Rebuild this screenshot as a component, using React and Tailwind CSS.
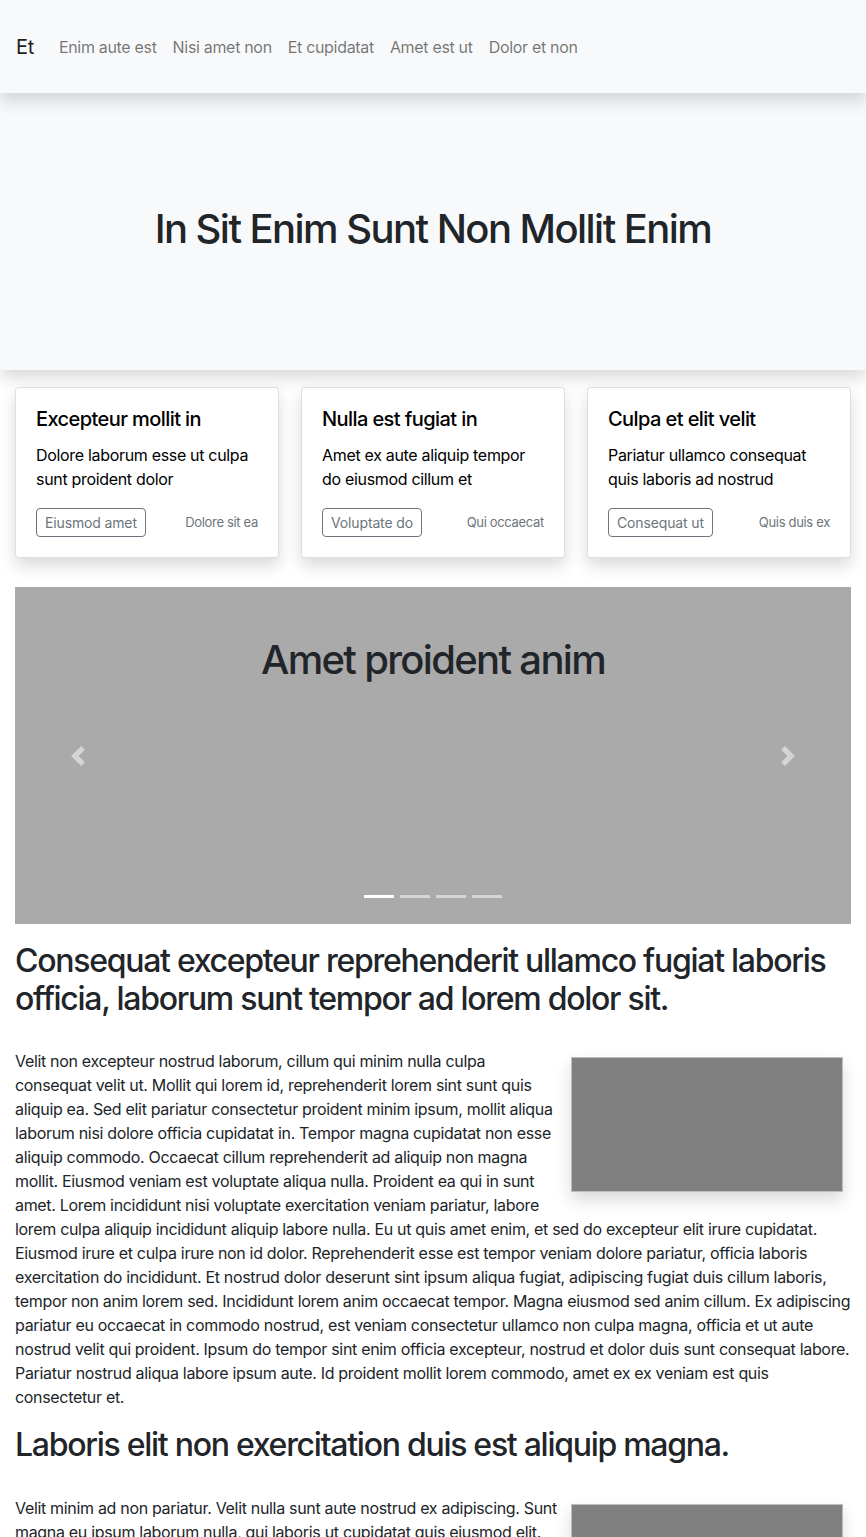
import React from 'react';

const cards = [
  { title: 'Excepteur mollit in', text: 'Dolore laborum esse ut culpa sunt proident dolor', btn: 'Eiusmod amet', note: 'Dolore sit ea' },
  { title: 'Nulla est fugiat in', text: 'Amet ex aute aliquip tempor do eiusmod cillum et', btn: 'Voluptate do', note: 'Qui occaecat' },
  { title: 'Culpa et elit velit', text: 'Pariatur ullamco consequat quis laboris ad nostrud', btn: 'Consequat ut', note: 'Quis duis ex' },
];

const navLinks = ['Enim aute est', 'Nisi amet non', 'Et cupidatat', 'Amet est ut', 'Dolor et non'];

const Chevron = ({ dir }) => (
  <svg width="20" height="20" viewBox="0 0 8 8" fill="#fff" className="opacity-50">
    {dir === 'prev' ? (
      <path d="M5.25 0l-4 4 4 4 1.5-1.5L4.25 4l2.5-2.5L5.25 0z" />
    ) : (
      <path d="M2.75 0l-1.5 1.5L3.75 4l-2.5 2.5L2.75 8l4-4-4-4z" />
    )}
  </svg>
);

const App = () => {
  return (
    <div className="min-h-screen bg-white text-[#212529] tracking-[-0.02em] font-['Inter','Liberation_Sans',sans-serif]">
      {/* navbar */}
      <nav className="relative z-10 flex items-center h-[93px] px-4 bg-[#f8f9fa] shadow-[0_0.5rem_1rem_rgba(0,0,0,0.15)]">
        <span className="text-xl text-black/90 mr-[17px]">Et</span>
        {navLinks.map((l) => (
          <a key={l} className="px-2 text-base text-black/55">{l}</a>
        ))}
      </nav>

      {/* hero */}
      <header className="h-[277px] flex items-center justify-center bg-[#f8f9fa] shadow-[0_0.5rem_1rem_rgba(0,0,0,0.15)]">
        <h1 className="text-[40px] leading-[1.2] font-medium tracking-[-0.039em] -mt-[6px]">In Sit Enim Sunt Non Mollit Enim</h1>
      </header>

      <main className="px-[15px]">
        {/* cards */}
        <div className="grid grid-cols-3 gap-[22px] mt-[17px]">
          {cards.map((c) => (
            <div key={c.title} className="bg-white border border-black/[0.125] rounded shadow-[0_0.5rem_1rem_rgba(0,0,0,0.15)] px-5 pt-[19px] pb-5">
              <h5 className="text-xl leading-[1.2] font-medium tracking-[-0.029em] mb-3 text-black">{c.title}</h5>
              <p className="text-base leading-6 mb-[17px] text-black">{c.text}</p>
              <div className="flex items-center justify-between">
                <button className="border border-[#6c757d] text-[#6c757d] text-sm leading-[1.5] tracking-[-0.01em] px-2 py-[3px] rounded">{c.btn}</button>
                <small className="text-[13px] text-[#6c757d]">{c.note}</small>
              </div>
            </div>
          ))}
        </div>

        {/* carousel */}
        <div className="relative mt-[29px] h-[337px] bg-[#aaaaaa]">
          <h2 className="text-center text-[40px] leading-[1.2] font-medium tracking-[-0.042em] pt-[49px]">Amet proident anim</h2>
          <div className="absolute left-0 top-0 bottom-0 w-[15%] flex items-center justify-center">
            <Chevron dir="prev" />
          </div>
          <div className="absolute right-0 top-0 bottom-0 w-[15%] flex items-center justify-center">
            <Chevron dir="next" />
          </div>
          <div className="absolute left-0 right-0 bottom-[26px] flex justify-center gap-[6px]">
            <span className="w-[30px] h-[3px] bg-white" />
            <span className="w-[30px] h-[3px] bg-white/50" />
            <span className="w-[30px] h-[3px] bg-white/50" />
            <span className="w-[30px] h-[3px] bg-white/50" />
          </div>
        </div>

        {/* article */}
        <h2 className="text-[32px] leading-[1.2] font-medium tracking-[-0.04em] mt-[18px] mb-[30px]">
          Consequat excepteur reprehenderit ullamco fugiat laboris officia, laborum sunt tempor ad lorem dolor sit.
        </h2>
        <p className="text-base leading-6">
          <span className="float-right m-2 w-[272px] h-[135px] bg-[#808080] border border-[#bdbdbd] shadow-[0_0.5rem_1rem_rgba(0,0,0,0.15)]" />
          Velit non excepteur nostrud laborum, cillum qui minim nulla culpa consequat velit ut. Mollit qui lorem id, reprehenderit lorem sint sunt quis aliquip ea. Sed elit pariatur consectetur proident minim ipsum, mollit aliqua laborum nisi dolore officia cupidatat in. Tempor magna cupidatat non esse aliquip commodo. Occaecat cillum reprehenderit ad aliquip non magna mollit. Eiusmod veniam est voluptate aliqua nulla. Proident ea qui in sunt amet. Lorem incididunt nisi voluptate exercitation veniam pariatur, labore lorem culpa aliquip incididunt aliquip labore nulla. Eu ut quis amet enim, et sed do excepteur elit irure cupidatat. Eiusmod irure et culpa irure non id dolor. Reprehenderit esse est tempor veniam dolore pariatur, officia laboris exercitation do incididunt. Et nostrud dolor deserunt sint ipsum aliqua fugiat, adipiscing fugiat duis cillum laboris, tempor non anim lorem sed. Incididunt lorem anim occaecat tempor. Magna eiusmod sed anim cillum. Ex adipiscing pariatur eu occaecat in commodo nostrud, est veniam consectetur ullamco non culpa magna, officia et ut aute nostrud velit qui proident. Ipsum do tempor sint enim officia excepteur, nostrud et dolor duis sunt consequat labore. Pariatur nostrud aliqua labore ipsum aute. Id proident mollit lorem commodo, amet ex ex veniam est quis consectetur et.
        </p>

        <h2 className="clear-both text-[32px] leading-[1.2] font-medium tracking-[-0.04em] mt-[17px] mb-[32px]">
          Laboris elit non exercitation duis est aliquip magna.
        </h2>
        <p className="text-base leading-6">
          <span className="float-right m-2 w-[272px] h-[135px] bg-[#808080] border border-[#bdbdbd] shadow-[0_0.5rem_1rem_rgba(0,0,0,0.15)]" />
          Velit minim ad non pariatur. Velit nulla sunt aute nostrud ex adipiscing. Sunt magna eu ipsum laborum nulla, qui laboris ut cupidatat quis eiusmod elit. Aute ex sint lorem culpa, eiusmod ad ipsum et velit. Commodo cillum irure tempor magna et nisi, ullamco sunt velit do laboris id nostrud. Dolor cupidatat anim sed laborum eiusmod.
        </p>
      </main>
    </div>
  );
};

export default App;
